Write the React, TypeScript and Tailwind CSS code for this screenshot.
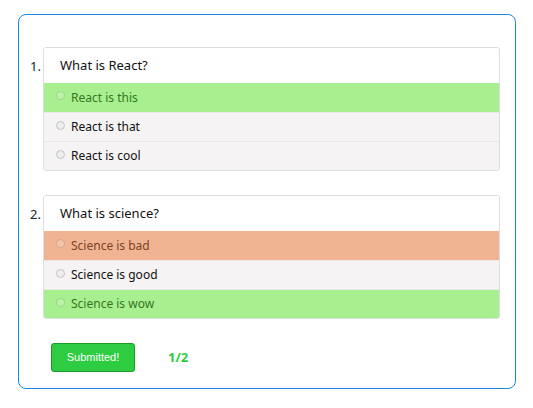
import React from "react"
import clsx from "clsx"

type Option = { label: string; state?: "correct" | "wrong" }

interface Question {
  title: string
  options: Option[]
}

const questions: Question[] = [
  {
    title: "What is React?",
    options: [
      { label: "React is this", state: "correct" },
      { label: "React is that" },
      { label: "React is cool" },
    ],
  },
  {
    title: "What is science?",
    options: [
      { label: "Science is bad", state: "wrong" },
      { label: "Science is good" },
      { label: "Science is wow", state: "correct" },
    ],
  },
]

const Radio = ({ faded }: { faded?: boolean }) => (
  <span
    className={clsx(
      "inline-block w-[9px] h-[9px] rounded-full border shrink-0",
      faded
        ? "border-[#00000022] bg-[#ffffff33]"
        : "border-[#c4c4c4] bg-[#eeeeee]"
    )}
  />
)

const QuestionCard = ({ index, q }: { index: number; q: Question }) => (
  <div className="flex">
    <div className="w-[13px] pt-[10px] text-[13px] text-[#222]">{index}.</div>
    <div className="flex-1 border border-[#dddddd] rounded-[3px] overflow-hidden">
      <div className="h-[35px] pl-[16px] flex items-center text-[13px] text-[#111] bg-white">
        {q.title}
      </div>
      {q.options.map((opt, i) => (
        <div
          key={opt.label}
          className={clsx(
            "h-[29px] flex items-center gap-[6px] pl-[12px] text-[12px]",
            i > 0 && "border-t border-[#e9e7ea]",
            opt.state === "correct" && "bg-[#a8f08f] text-[#34761f]",
            opt.state === "wrong" && "bg-[#f0b492] text-[#7a4426]",
            !opt.state && "bg-[#f5f3f4] text-[#111]"
          )}
        >
          <span className="-mt-[4px] flex">
            <Radio faded={!!opt.state} />
          </span>
          {opt.label}
        </div>
      ))}
    </div>
  </div>
)

export default function App() {
  return (
    <div className="w-[533px] h-[408px] bg-white pt-[14px] pl-[18px] font-['Noto_Sans',sans-serif]">
      <div className="w-[498px] h-[375px] border border-[#1e88e5] rounded-[8px] pt-[32px] pl-[11px] pr-[15px]">
        <div className="flex flex-col gap-[24px]">
          {questions.map((q, i) => (
            <QuestionCard key={q.title} index={i + 1} q={q} />
          ))}
        </div>
        <div className="flex items-center mt-[24px] pl-[21px]">
          <button className="w-[84px] h-[29px] bg-[#2ecc40] border border-[#1d9a2a] rounded-[3px] text-white text-[11px] font-['Liberation_Sans',sans-serif]">
            Submitted!
          </button>
          <span className="ml-[33px] text-[13px] font-bold text-[#2ecc40]">
            1/2
          </span>
        </div>
      </div>
    </div>
  )
}
